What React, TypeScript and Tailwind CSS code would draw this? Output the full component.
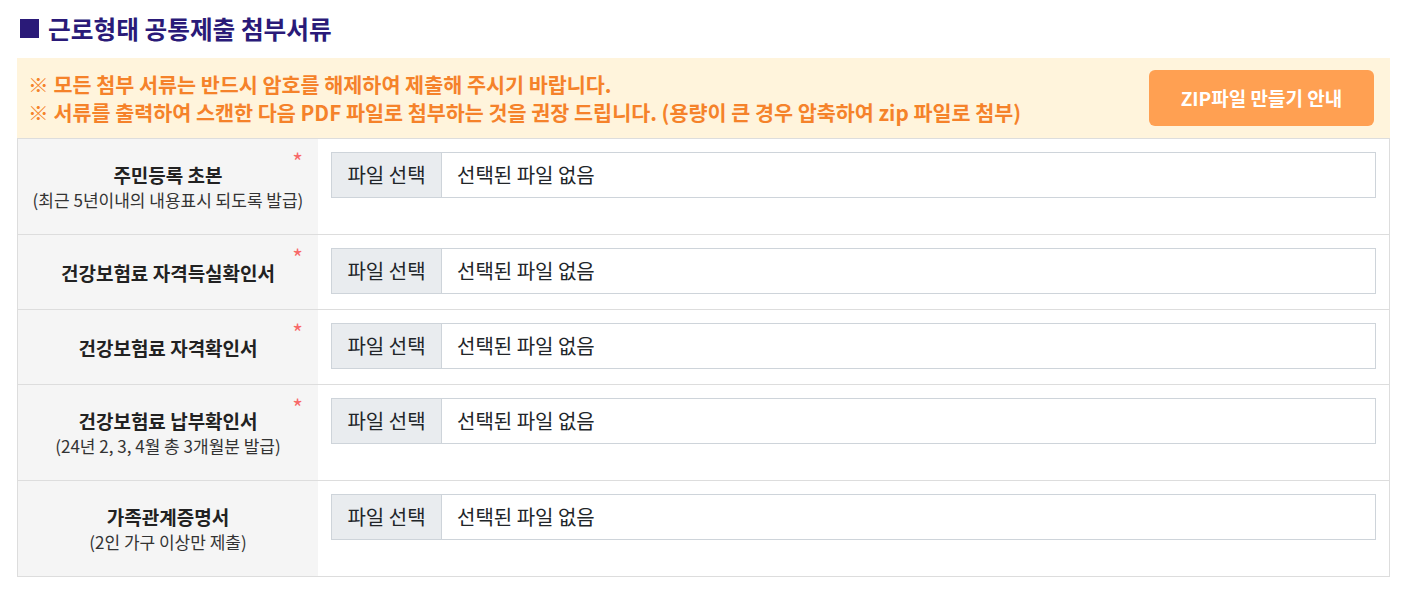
import React from 'react';

type Doc = {
    title: string;
    note?: string;
    required: boolean;
};

const docs: Doc[] = [
    { title: '주민등록 초본', note: '(최근 5년이내의 내용표시 되도록 발급)', required: true },
    { title: '건강보험료 자격득실확인서', required: true },
    { title: '건강보험료 자격확인서', required: true },
    { title: '건강보험료 납부확인서', note: '(24년 2, 3, 4월 총 3개월분 발급)', required: true },
    { title: '가족관계증명서', note: '(2인 가구 이상만 제출)', required: false },
];

const FileInput: React.FC = () => (
    <div className="flex h-[46px] w-full border border-[#ced4da] bg-white">
        <span className="flex w-[110px] shrink-0 items-center justify-center border-r border-[#ced4da] bg-[#e9ecef] text-[20px] text-[#212529]">
            파일 선택
        </span>
        <span className="flex items-center pl-[15px] text-[20px] text-[#212529]">선택된 파일 없음</span>
    </div>
);

const DocRow: React.FC<{ doc: Doc; last: boolean }> = ({ doc, last }) => (
    <div className={`flex ${last ? '' : 'border-b border-[#dddddd]'}`}>
        <div
            className={`relative flex w-[300px] shrink-0 flex-col items-center justify-center bg-[#f5f5f5] text-center ${doc.note ? 'py-[22px]' : ''}`}
        >
            {doc.required && (
                <span className="absolute right-[15px] top-[11px] text-[23px] leading-none text-[#f86a6a]">*</span>
            )}
            <p className="text-[19px] font-bold leading-[27px] text-[#222222]">{doc.title}</p>
            {doc.note && <p className="text-[17px] leading-[24px] text-[#333333]">{doc.note}</p>}
        </div>
        <div className="flex-1 px-[13px] pb-[15px] pt-[13px]">
            <FileInput />
        </div>
    </div>
);

export default function App() {
    return (
        <div
            className="min-h-screen bg-white px-[17px] pt-[13px]"
            style={{ fontFamily: '"Noto Sans CJK KR", "Noto Sans", sans-serif' }}
        >
            <h2 className="flex items-center gap-[9px] pl-[3px] text-[24.7px] font-bold leading-[30px] text-[#2a1a78]">
                <span className="inline-block h-[19px] w-[19px] bg-[#2a1a78]" />
                근로형태 공통제출 첨부서류
            </h2>

            <div className="mt-[15px] flex w-[1373px] items-center justify-between bg-[#fff4dc] py-[12px] pl-[11px] pr-[16px]">
                <div className="text-[20.7px] font-bold leading-[28px] text-[#f5822a]">
                    <p>※ 모든 첨부 서류는 반드시 암호를 해제하여 제출해 주시기 바랍니다.</p>
                    <p>※ 서류를 출력하여 스캔한 다음 PDF 파일로 첨부하는 것을 권장 드립니다. (용량이 큰 경우 압축하여 zip 파일로 첨부)</p>
                </div>
                <button className="flex h-[56px] w-[225px] items-center justify-center rounded-[6px] bg-[#ffa052] text-[19px] font-bold text-white">
                    ZIP파일 만들기 안내
                </button>
            </div>

            <div className="w-[1373px] border border-[#dddddd]">
                {docs.map((doc, i) => (
                    <DocRow key={doc.title} doc={doc} last={i === docs.length - 1} />
                ))}
            </div>
        </div>
    );
}
